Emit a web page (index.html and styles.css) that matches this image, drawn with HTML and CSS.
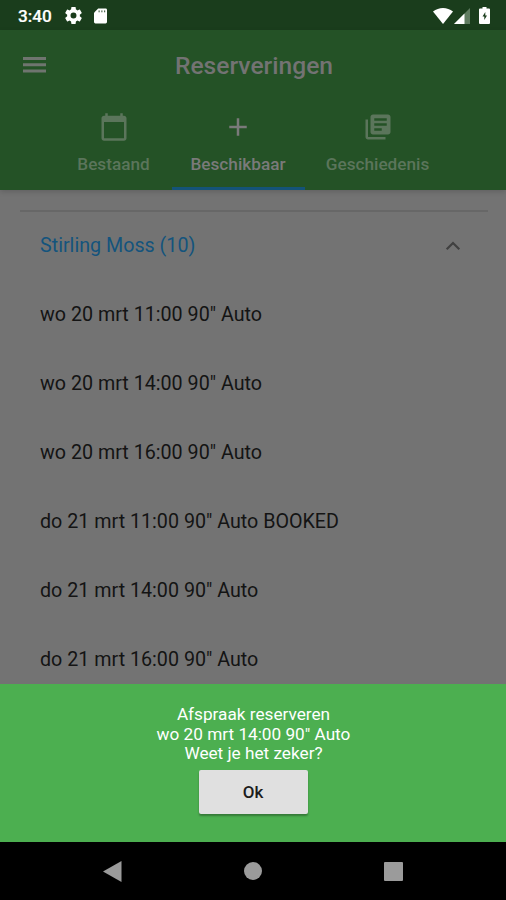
FILE: index.html
```html
<!DOCTYPE html>
<html lang="nl">
<head>
<meta charset="utf-8">
<title>Reserveringen</title>
<link rel="stylesheet" href="styles.css">
</head>
<body>
<div class="screen">
  <div class="status">
    <span class="clock">3:40</span>
    <svg class="gear" width="17" height="17" viewBox="2 2 20 20"><path d="M19.43 12.98c.04-.32.07-.64.07-.98s-.03-.66-.07-.98l2.11-1.65c.19-.15.24-.42.12-.64l-2-3.46c-.12-.22-.39-.3-.61-.22l-2.49 1c-.52-.4-1.08-.73-1.69-.98l-.38-2.65C14.46 2.18 14.25 2 14 2h-4c-.25 0-.46.18-.49.42l-.38 2.65c-.61.25-1.17.59-1.69.98l-2.49-1c-.23-.09-.49 0-.61.22l-2 3.46c-.13.22-.07.49.12.64l2.11 1.65c-.04.32-.07.65-.07.98s.03.66.07.98l-2.11 1.65c-.19.15-.24.42-.12.64l2 3.46c.12.22.39.3.61.22l2.49-1c.52.4 1.08.73 1.69.98l.38 2.65c.03.24.24.42.49.42h4c.25 0 .46-.18.49-.42l.38-2.65c.61-.25 1.17-.59 1.69-.98l2.49 1c.23.09.49 0 .61-.22l2-3.46c.12-.22.07-.49-.12-.64l-2.11-1.65zM12 15.5A3.5 3.5 0 1 1 12 8.500a3.500 3.500 0 0 1 0 7z"/></svg>
    <svg class="sd" width="13" height="16" viewBox="0 0 14 16"><path d="M4.500 0H12.500Q14 0 14 1.500V14.500Q14 16 12.500 16H1.500Q0 16 0 14.500V4.500z"/><path class="pins" d="M5.500 2v2M8.500 2v2M11.500 2v2"/></svg>
    <div class="signals">
      <svg width="20" height="16" viewBox="0 0 20 16"><path d="M0 3.500Q4.500 0 10 0T20 3.500L10 16z"/></svg>
      <svg class="cell" width="16" height="16" viewBox="0 0 16 16"><path class="faint" d="M0 16L16 0V16z"/><path d="M0 16L10.500 5.500V16z"/></svg>
      <svg class="battery" width="11" height="17" viewBox="0 0 11 17"><path d="M3.500 0h4v1.500H10q1 0 1 1V16q0 1-1 1H1q-1 0-1-1V2.500q0-1 1-1h2.500z"/><path class="bolt" d="M6.300 5L3.500 9.500h1.800v3.500l2.700-4.500H6.300z"/></svg>
    </div>
  </div>
  <header class="header">
    <div class="bar">
      <svg class="menu" width="23" height="16" viewBox="0 0 23 16"><path d="M0 0h23v3H0zM0 6.300h23v3H0zM0 12.500h23v3H0z"/></svg>
      <h1 class="title">Reserveringen</h1>
    </div>
    <nav class="tabs">
      <div class="tab tab-first">
        <svg width="30" height="30" viewBox="0 0 24 24"><path d="M20 3h-1V1h-2v2H7V1H5v2H4c-1.100 0-2 .9-2 2v16c0 1.100.9 2 2 2h16c1.100 0 2-.9 2-2V5c0-1.100-.9-2-2-2zm0 18H4V8h16v13z"/></svg>
        <span>Bestaand</span>
      </div>
      <div class="tab tab-active">
        <svg width="30" height="30" viewBox="0 0 24 24"><path d="M19 13h-6v6h-2v-6H5v-2h6V5h2v6h6v2z"/></svg>
        <span>Beschikbaar</span>
      </div>
      <div class="tab tab-last">
        <svg width="30" height="30" viewBox="0 0 24 24"><path d="M4 6H2v14c0 1.100.9 2 2 2h14v-2H4V6zm16-4H8c-1.100 0-2 .9-2 2v12c0 1.100.9 2 2 2h12c1.100 0 2-.9 2-2V4c0-1.100-.9-2-2-2zm-1 9H9V9h10v2zm-4 4H9v-2h6v2zm4-8H9V5h10v2z"/></svg>
        <span>Geschiedenis</span>
      </div>
    </nav>
  </header>
  <main class="list">
    <div class="row group"><span>Stirling Moss (10)</span>
      <svg width="16" height="10" viewBox="0 0 16 10"><path d="M1.700 8.300L8 2l6.300 6.300"/></svg>
    </div>
    <div class="row">wo 20 mrt 11:00 90" Auto</div>
    <div class="row">wo 20 mrt 14:00 90" Auto</div>
    <div class="row">wo 20 mrt 16:00 90" Auto</div>
    <div class="row">do 21 mrt 11:00 90" Auto BOOKED</div>
    <div class="row">do 21 mrt 14:00 90" Auto</div>
    <div class="row">do 21 mrt 16:00 90" Auto</div>
  </main>
  <section class="sheet">
    <p class="message">Afspraak reserveren<br>wo 20 mrt 14:00 90" Auto<br>Weet je het zeker?</p>
    <button class="ok">Ok</button>
  </section>
  <footer class="navigation">
    <svg width="19" height="21" viewBox="0 0 19 21"><path d="M0 10.500L18.500 0V21z"/></svg>
    <svg width="18" height="18" viewBox="0 0 18 18"><circle cx="9" cy="9" r="9"/></svg>
    <svg width="19" height="19" viewBox="0 0 19 19"><rect width="19" height="19" rx="1"/></svg>
  </footer>
</div>
</body>
</html>
```

FILE: styles.css
```css
* { box-sizing: border-box; }
body { margin: 0; font-family: Roboto, "Liberation Sans", sans-serif; }
svg { display: block; flex: none; }
.screen { width: 506px; height: 900px; display: flex; flex-direction: column; overflow: hidden; background: #737373; }
.status { height: 30px; flex: none; display: flex; align-items: center; padding: 1px 16px 0 18px; background: #1a3d1c; color: #fff; fill: #fff; }
.clock { font-size: 17.2px; font-weight: 500; width: 47px; -webkit-text-stroke: 0.2px #fff; }
.sd { margin-left: 12px; }
.pins { stroke: #1a3d1c; stroke-width: 1; }
.signals { margin-left: auto; display: flex; align-items: center; }
.cell { margin-left: 1px; }
.faint { fill: #5f7c60; }
.battery { margin-left: 9px; }
.bolt { fill: #1a3d1c; }
.header { height: 160px; flex: none; background: #245226; box-shadow: 0 2px 5px rgba(0, 0, 0, .15); }
.bar { height: 70px; display: grid; grid-template-columns: 60px 1fr 58px; align-items: center; }
.menu { margin-left: 23px; fill: #6f756f; }
.title { margin: 0; text-align: center; font-size: 24.6px; font-weight: 500; line-height: 30px; padding-top: 1px; color: #737373; }
.tabs { height: 90px; display: flex; justify-content: center; color: #5b755b; fill: #5b755b; font-size: 17.2px; font-weight: 500; }
.tab { display: flex; flex-direction: column; align-items: center; padding-top: 12px; border-bottom: 3px solid transparent; }
.tab span { line-height: 20px; margin-top: 12px; }
.tab-first { width: 116px; }
.tab-active { width: 133px; border-bottom-color: #145378; color: #7a7a7a; fill: #7a7a7a; }
.tab-last { width: 146px; }
.list { flex: 1; margin: 20px 18px 0 20px; border-top: 2px solid #676767; min-height: 0; }
.row { height: 68.9px; padding: 0 20px; display: flex; align-items: center; font-size: 19.7px; line-height: 24px; color: #141414; }
.group { color: #14547d; justify-content: space-between; }
.group svg { margin-right: 7px; margin-bottom: 1px; fill: none; stroke: #404040; stroke-width: 2.2; }
.sheet { height: 158px; flex: none; padding-top: 21px; display: flex; flex-direction: column; align-items: center; background: #4caf50; }
.message { margin: 0 0 0 1px; text-align: center; font-size: 17.2px; line-height: 19.5px; color: #fff; }
.ok { margin-top: 6.500px; width: 109px; height: 44px; padding: 0; border: 0; border-radius: 2px; background: #e0e0e0; color: #1c1c1c; font: 500 17px Roboto, "Liberation Sans", sans-serif; box-shadow: 0 2px 2px rgba(0, 0, 0, .3); }
.navigation { height: 58px; flex: none; display: flex; align-items: center; justify-content: space-between; padding: 0 103px; background: #000; fill: #9b9b9b; }
```
